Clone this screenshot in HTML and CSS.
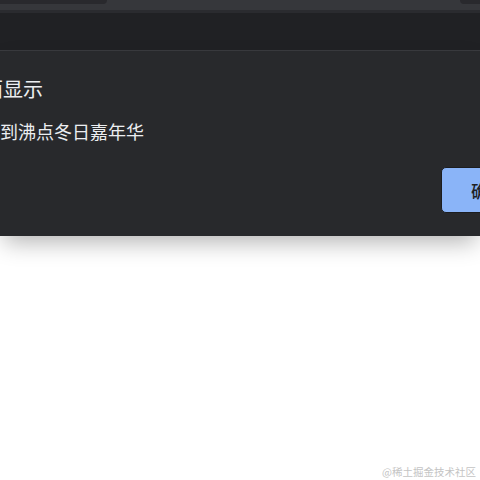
FILE: index.html
```html
<!DOCTYPE html>
<html lang="zh-CN">
<head>
<meta charset="utf-8">
<link rel="stylesheet" href="styles.css">
</head>
<body>
<div class="chrome">
  <div class="tabs">
    <div class="tab tab-left"></div>
    <div class="tab tab-right"></div>
  </div>
  <div class="sep"></div>
  <div class="toolbar"></div>
</div>
<div class="dialog">
  <div class="title">面显示</div>
  <div class="msg">到沸点冬日嘉年华</div>
  <div class="actions"><button class="ok">确定</button></div>
</div>
<div class="page">
  <span class="wm">@稀土掘金技术社区</span>
</div>
</body>
</html>
```

FILE: styles.css
```css
html, body {
  margin: 0;
  padding: 0;
  width: 480px;
  height: 480px;
  overflow: hidden;
  background: #ffffff;
  font-family: "Noto Sans CJK SC", "Noto Sans", sans-serif;
}

.chrome {
  display: flex;
  flex-direction: column;
}

.tabs {
  height: 10px;
  background: #36373b;
  display: flex;
  justify-content: space-between;
}

.tab {
  background: #29292d;
  height: 4px;
}

.tab-left {
  width: 107px;
  border-bottom-right-radius: 6px;
}

.tab-right {
  width: 20px;
  border-bottom-left-radius: 6px;
}

.sep {
  height: 3px;
  background: #2a2b2f;
}

.toolbar {
  height: 37px;
  background: #202124;
  border-bottom: 1px solid #3a3b3f;
}

.dialog {
  position: relative;
  z-index: 1;
  background: #28292c;
  padding: 26px 0 23px 0;
  display: flex;
  flex-direction: column;
  box-shadow: 0 10px 22px -4px rgba(0, 0, 0, 0.3);
}

.title {
  margin-left: -17px;
  font-size: 20px;
  line-height: 24px;
  color: #eceef1;
}

.msg {
  margin-top: 19px;
  margin-left: 0;
  font-size: 18px;
  line-height: 22px;
  color: #eceef1;
}

.actions {
  margin-top: 25px;
  display: flex;
  justify-content: flex-end;
  margin-right: -45px;
}

.ok {
  width: 84px;
  height: 46px;
  padding: 0 0 0 29px;
  text-align: left;
  border: 1px solid #1c1d20;
  border-radius: 5px;
  background: #8ab4f8;
  color: #202124;
  font-family: "Noto Sans CJK SC", "Noto Sans", sans-serif;
  font-size: 17px;
  font-weight: 500;
}

.page {
  height: 243px;
  display: flex;
  justify-content: flex-end;
  align-items: flex-end;
  padding: 0 4px 5px 0;
}

.wm {
  font-size: 10.5px;
  line-height: 14px;
  color: #c4c4c4;
}
```
